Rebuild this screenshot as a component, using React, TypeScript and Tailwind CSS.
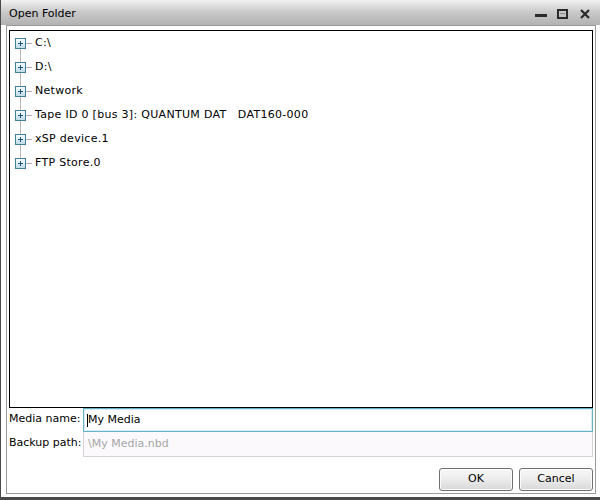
import type { ReactNode } from "react";

const font = { fontFamily: '"DejaVu Sans", Verdana, sans-serif' };

const drives = [
  "C:\\",
  "D:\\",
  "Network",
  "Tape ID 0 [bus 3]: QUANTUM DAT   DAT160-000",
  "xSP device.1",
  "FTP Store.0",
];

function PlusBox() {
  return (
    <svg width="11" height="11" viewBox="0 0 11 11" className="block shrink-0">
      <defs>
        <linearGradient id="pb" x1="0" y1="0" x2="0" y2="1">
          <stop offset="0" stopColor="#ffffff" />
          <stop offset="1" stopColor="#bcd9e6" />
        </linearGradient>
      </defs>
      <rect x="0.5" y="0.5" width="10" height="10" fill="url(#pb)" stroke="#3f7f99" />
      <path d="M3 5.5h5M5.5 3v5" stroke="#1b5873" strokeWidth="1" />
    </svg>
  );
}

function TreeRow({ label, first, last }: { label: string; first: boolean; last: boolean }) {
  return (
    <div className="flex h-[24px] items-stretch">
      <div className="flex w-[11px] flex-col items-center">
        <div className={first ? "w-px flex-1" : "w-px flex-1 bg-[#b8b8b8]"} />
        <PlusBox />
        <div className={last ? "w-px flex-1" : "w-px flex-1 bg-[#b8b8b8]"} />
      </div>
      <div className="flex items-center">
        <div className="h-px w-[6px] bg-[#b0b0b0]" />
        <span className="ml-[3px] whitespace-pre text-[11px] tracking-[0.3px] text-black">{label}</span>
      </div>
    </div>
  );
}

function FieldRow({ label, children }: { label: string; children: ReactNode }) {
  return (
    <div className="flex">
      <div className="w-[74px] pt-[3px] text-[11px] text-black whitespace-nowrap">{label}</div>
      <div className="flex-1">{children}</div>
    </div>
  );
}

function Button({ children }: { children: ReactNode }) {
  return (
    <button className="h-[23px] w-[74px] rounded-[3px] border border-[#707070] bg-gradient-to-b from-[#f8f8f8] via-[#ececec] to-[#d8d8d8] text-[11px] text-black shadow-[inset_0_0_0_1px_#fcfcfc]">
      {children}
    </button>
  );
}

export default function App() {
  return (
    <div
      style={font}
      className="flex h-[500px] w-[600px] flex-col border-b-[3px] border-l border-[#4a4a4a] bg-white"
    >
      <div className="flex h-[25px] shrink-0 items-center bg-gradient-to-b from-[#f2f2f2] via-[#c8c8c8] to-[#b2b2b2] pl-[8px] pr-[10px] pt-[3px]">
        <span className="text-[11px] text-black">Open Folder</span>
        <div className="ml-auto flex items-center gap-[10px]">
          <svg width="12" height="10" viewBox="0 0 12 10">
            <rect x="0" y="5" width="12" height="3" fill="#2a2a2a" />
          </svg>
          <svg width="11" height="10" viewBox="0 0 11 10">
            <rect x="1" y="1" width="9" height="8" fill="none" stroke="#2a2a2a" strokeWidth="2" />
            <rect x="3" y="4" width="5" height="1" fill="#8a8a8a" />
          </svg>
          <svg width="10" height="10" viewBox="0 0 10 10" className="ml-[2px]">
            <path d="M1 1l8 8M9 1l-8 8" stroke="#2a2a2a" strokeWidth="2.2" />
          </svg>
        </div>
      </div>
      <div className="mb-[3px] ml-[5px] mr-[4px] flex flex-1 flex-col border border-[#9a9a9a] bg-white pl-[2px] pr-[2px] pt-[4px]">
        <div className="flex flex-1 flex-col border border-black pl-[5px]">
          {drives.map((d, i) => (
            <TreeRow key={d} label={d} first={i === 0} last={i === drives.length - 1} />
          ))}
        </div>
        <div className="flex flex-col">
          <FieldRow label="Media name:">
            <div className="flex h-[24px] items-center border border-[#6bb0c9] pl-[3px] shadow-[inset_0_0_0_1px_#d7ecf3]">
              <span className="h-[13px] w-px bg-black" />
              <span className="text-[11px] text-black">My Media</span>
            </div>
          </FieldRow>
          <FieldRow label="Backup path:">
            <div className="flex h-[25px] items-center border border-t-0 border-[#d4d4d8] bg-[#fcf9fd] pl-[4px]">
              <span className="text-[11px] text-[#a6a6a6]">\My Media.nbd</span>
            </div>
          </FieldRow>
        </div>
        <div className="flex justify-end gap-[6px] pb-[2px] pt-[11px]">
          <Button>OK</Button>
          <Button>Cancel</Button>
        </div>
      </div>
    </div>
  );
}
